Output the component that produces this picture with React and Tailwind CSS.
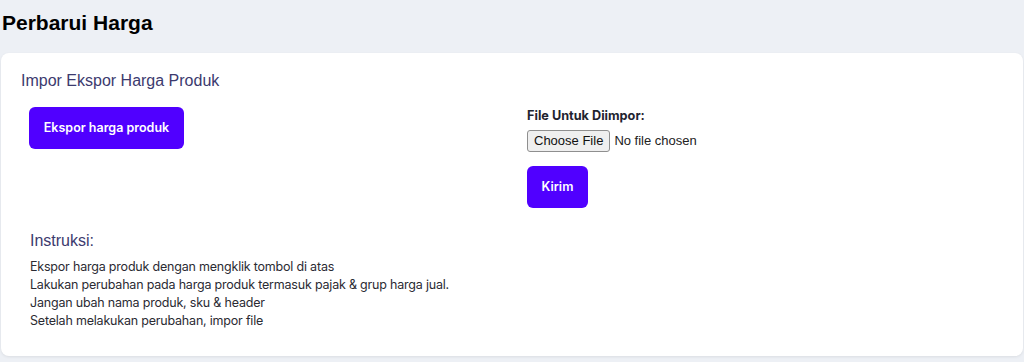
import React from 'react';

const instructions = [
  'Ekspor harga produk dengan mengklik tombol di atas',
  'Lakukan perubahan pada harga produk termasuk pajak & grup harga jual.',
  'Jangan ubah nama produk, sku & header',
  'Setelah melakukan perubahan, impor file',
];

const App = () => {
  return (
    <div className="min-h-[362px] bg-[#edf0f5] font-['Liberation_Sans',Arial,sans-serif]">
      {/* Page title */}
      <h1 className="px-[2px] pt-[9px] text-[21px] leading-[28px] font-bold text-black">Perbarui Harga</h1>

      {/* Card */}
      <div className="mx-px mt-4 rounded-lg bg-white px-5 pt-4 pb-[26px] shadow-[0_1px_3px_rgba(0,0,0,0.08)]">
        <h2 className="text-[16px] leading-6 text-[#3c3a6e]">Impor Ekspor Harga Produk</h2>

        <div className="mt-[14px] flex pl-2">
          {/* Export */}
          <div className="w-[498px]">
            <button className="h-[42px] w-[155px] rounded-md bg-[#5000ff] font-['Inter',sans-serif] text-[12.5px] font-semibold text-white">
              Ekspor harga produk
            </button>
          </div>

          {/* Import */}
          <div className="flex flex-col items-start">
            <label className="font-['Inter',sans-serif] text-[12.7px] leading-[18px] font-bold text-[#1f2430]">
              File Untuk Diimpor:
            </label>
            <input
              type="file"
              className="mt-[5px] text-[13px] leading-[18px] text-[#222] file:mr-[4px] file:h-[22px] file:rounded-[3px] file:border file:border-[#8f8f8f] file:bg-[#efefef] file:px-[6px] file:text-[#111]"
            />
            <button className="mt-[14px] h-[42px] w-[61px] rounded-md bg-[#5000ff] font-['Inter',sans-serif] text-[12.5px] font-semibold text-white">
              Kirim
            </button>
          </div>
        </div>

        {/* Instructions */}
        <div className="mt-[21px] pl-[9px]">
          <h3 className="text-[16px] leading-6 text-[#3c3a6e]">Instruksi:</h3>
          <ul className="mt-[5px] font-['Inter',sans-serif] text-[12.5px] leading-[18px] tracking-[-0.2px] text-[#2b2b33]">
            {instructions.map((line) => (
              <li key={line}>{line}</li>
            ))}
          </ul>
        </div>
      </div>
    </div>
  );
};

export default App;
